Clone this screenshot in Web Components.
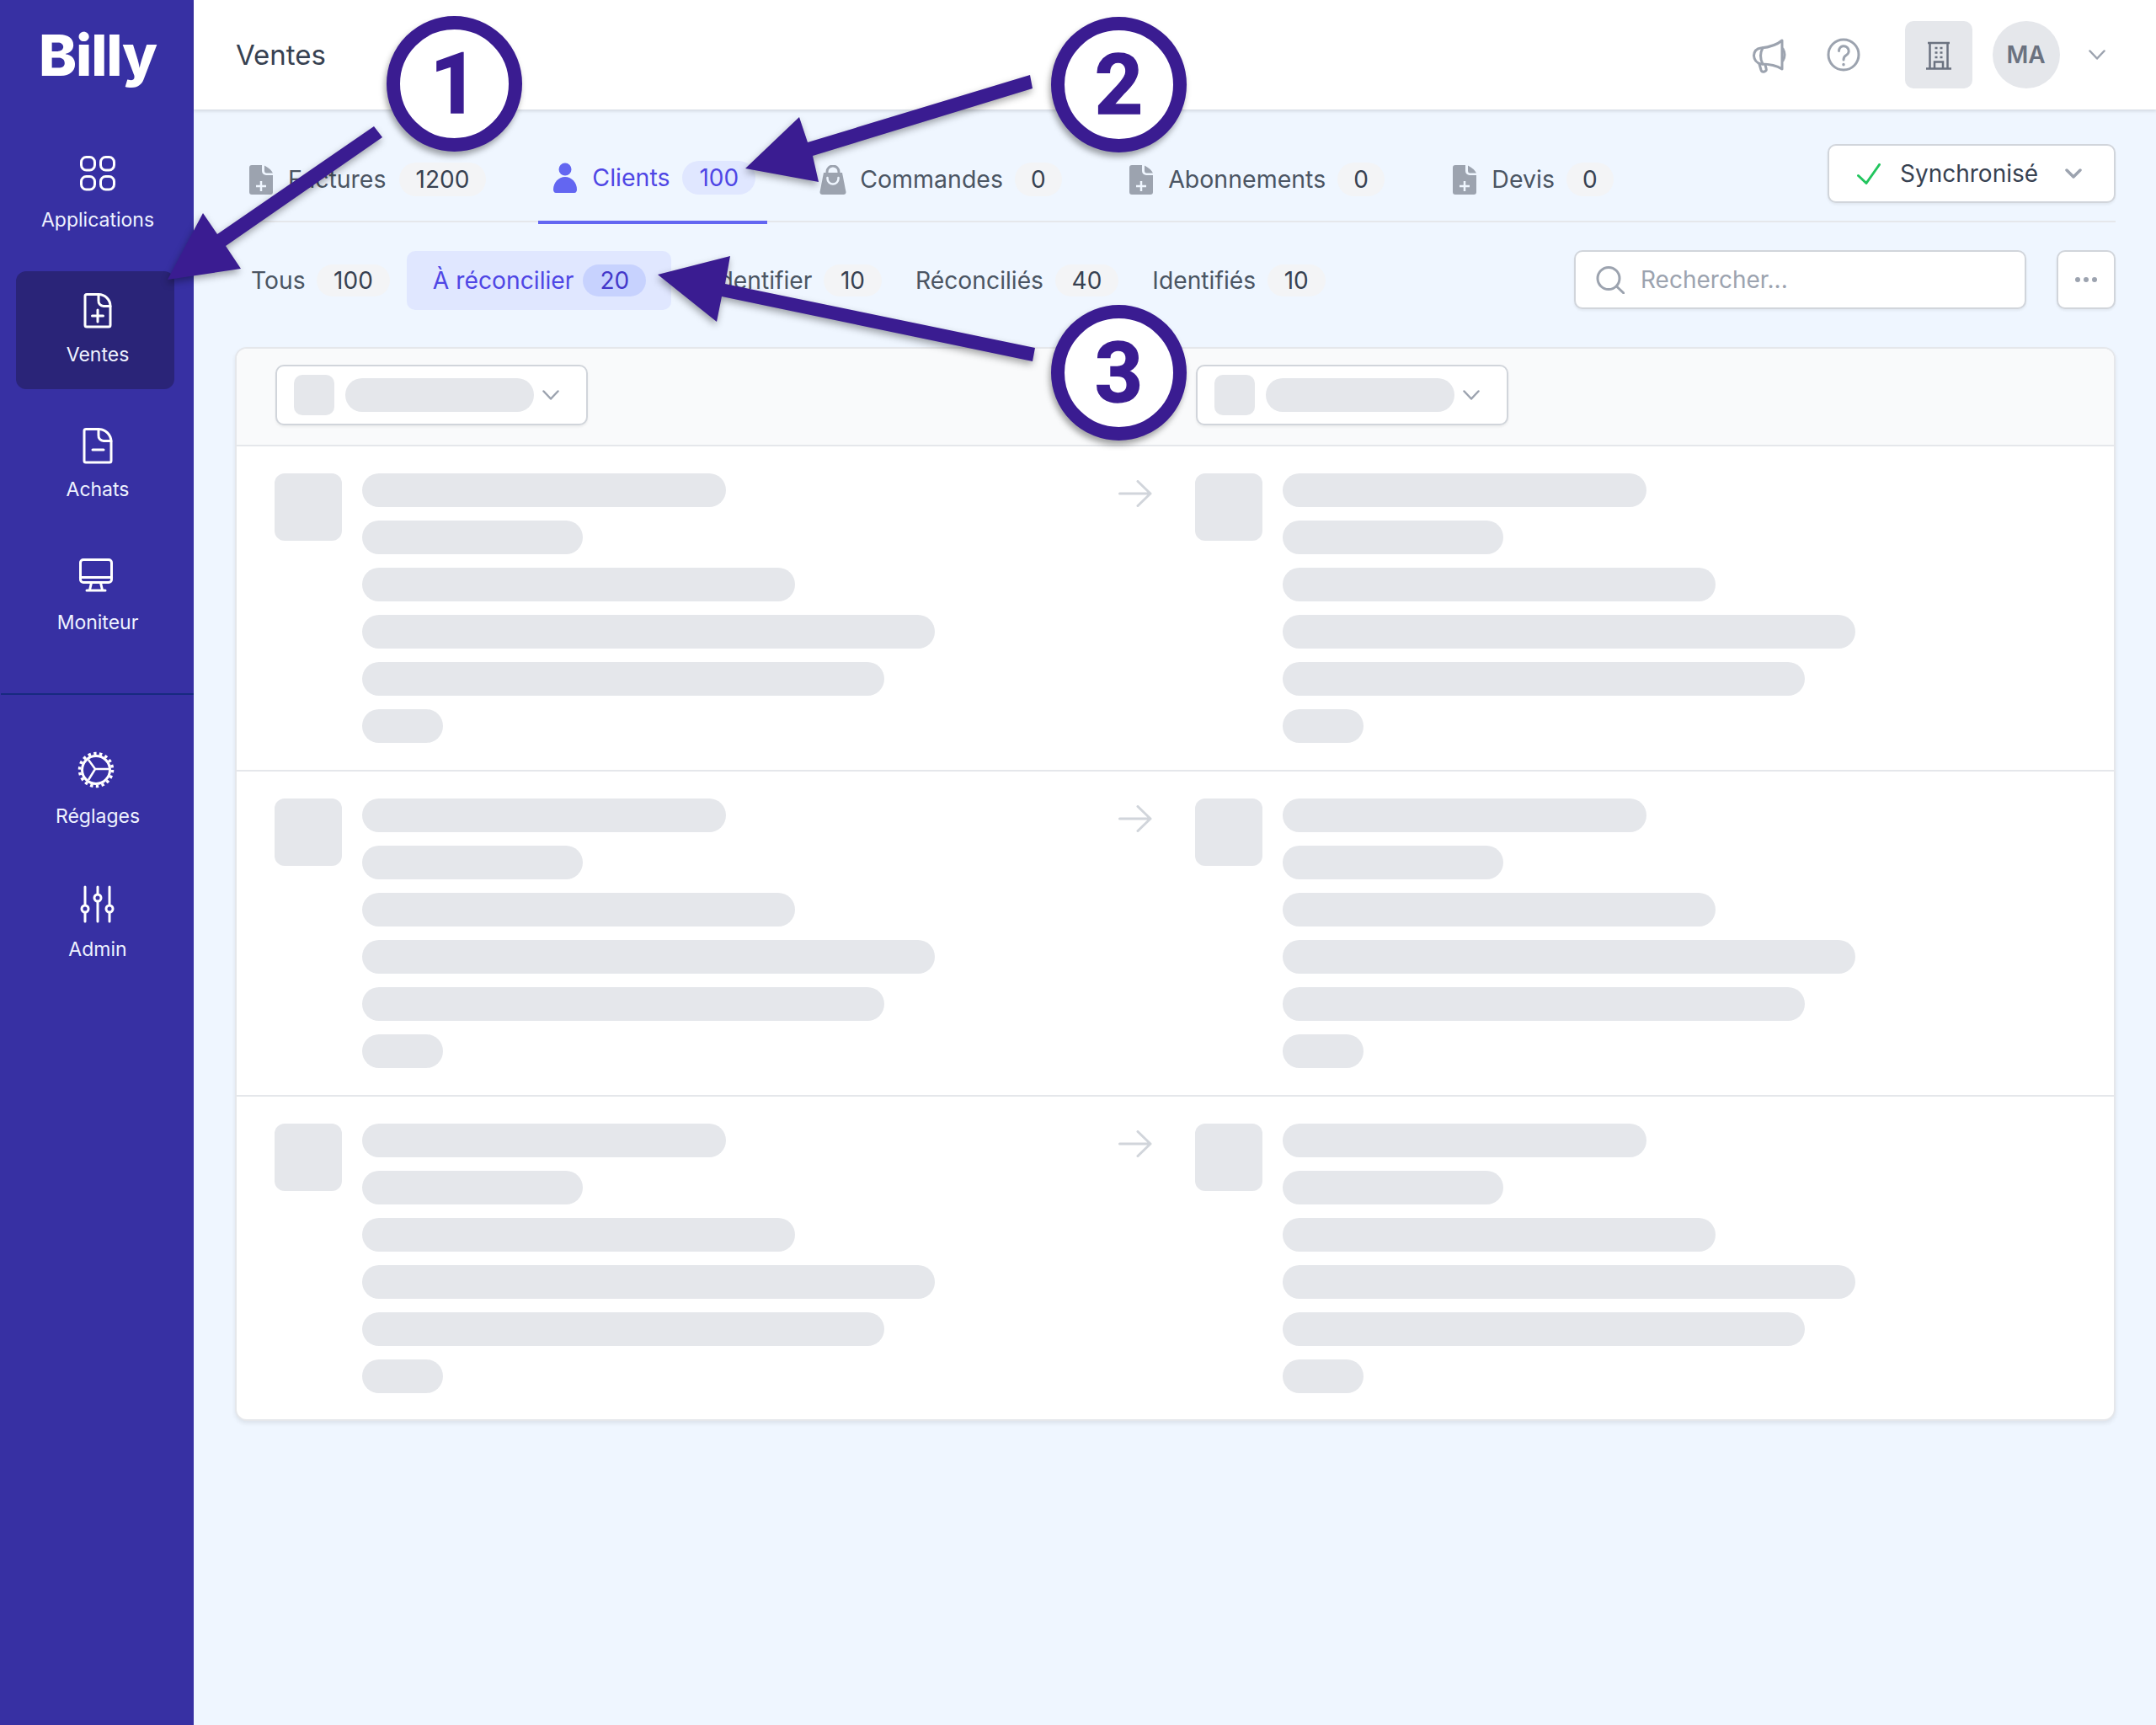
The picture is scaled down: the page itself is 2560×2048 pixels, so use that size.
<!DOCTYPE html>
<html lang="fr">
<head>
<meta charset="utf-8">
<title>Billy</title>
<style>
html,body{margin:0;padding:0;background:#eff6ff}
body{font-family:Inter,"Liberation Sans",sans-serif;width:2560px;height:2048px;position:relative;overflow:hidden}
</style>
</head>
<body>
<app-shell>
  <side-nav slot="nav">
    <nav-item label="Applications" icon="apps"></nav-item>
    <nav-item label="Ventes" icon="doc-plus" active></nav-item>
    <nav-item label="Achats" icon="doc-minus"></nav-item>
    <nav-item label="Moniteur" icon="monitor" style="margin-top:-2px"></nav-item>
    <nav-item slot="bottom" label="Réglages" icon="gear"></nav-item>
    <nav-item slot="bottom" label="Admin" icon="sliders"></nav-item>
  </side-nav>
  <top-bar slot="top" heading="Ventes"></top-bar>
  <tab-nav slot="main">
    <nav-tab label="Factures" count="1200" icon="t-doc" style="margin-left:16px"></nav-tab>
    <nav-tab label="Clients" count="100" icon="t-person" active style="margin-left:62px"></nav-tab>
    <nav-tab label="Commandes" count="0" icon="t-bag" style="margin-left:62.500px;--gap:16px"></nav-tab>
    <nav-tab label="Abonnements" count="0" icon="t-doc" style="margin-left:80.500px"></nav-tab>
    <nav-tab label="Devis" count="0" icon="t-doc" style="margin-left:81.500px"></nav-tab>
  </tab-nav>
  <filter-bar slot="main">
    <filter-tab label="Tous" count="100"></filter-tab>
    <filter-tab label="À réconcilier" count="20" active></filter-tab>
    <filter-tab label="À identifier" count="10" style="margin-left:2px"></filter-tab>
    <filter-tab label="Réconciliés" count="40"></filter-tab>
    <filter-tab label="Identifiés" count="10"></filter-tab>
  </filter-bar>
  <skeleton-card slot="main">
    <skeleton-row></skeleton-row>
    <skeleton-row></skeleton-row>
    <skeleton-row></skeleton-row>
  </skeleton-card>
</app-shell>
<note-layer>
  <note-badge style="left:459px;top:19px" num="1"></note-badge>
  <note-badge style="left:1248px;top:20px" num="2"></note-badge>
  <note-badge style="left:1248px;top:362px" num="3"></note-badge>
</note-layer>

<script>
const ICONS = {
  apps:'<svg width="60" height="60" viewBox="0 0 60 60" fill="none" stroke="currentColor" stroke-width="3"><rect x="10.5" y="6.5" width="16" height="15.5" rx="6"/><rect x="33.5" y="6.5" width="16" height="15.5" rx="6"/><rect x="10.5" y="29.5" width="16" height="15.5" rx="6"/><rect x="33.5" y="29.5" width="16" height="15.5" rx="6"/></svg>',
  'doc-plus':'<svg width="60" height="60" viewBox="0 0 60 60" fill="none" stroke="currentColor" stroke-width="3" stroke-linecap="round" stroke-linejoin="round"><path d="M17 9.500h14a14 14 0 0 1 14 14V46a2 2 0 0 1-2 2H17a2 2 0 0 1-2-2V11.500a2 2 0 0 1 2-2z"/><path d="M31 9.500V17a6 6 0 0 0 6 6.500h8"/><path d="M30 28v14M23.500 35h13"/></svg>',
  'doc-minus':'<svg width="60" height="60" viewBox="0 0 60 60" fill="none" stroke="currentColor" stroke-width="3" stroke-linecap="round" stroke-linejoin="round"><path d="M16 9.500h15a15 15 0 0 1 15 15V47a2 2 0 0 1-2 2H16a2 2 0 0 1-2-2V11.500a2 2 0 0 1 2-2z"/><path d="M31 9.500V17a6 6 0 0 0 6 6.500h9"/><path d="M24 34h13"/></svg>',
  monitor:'<svg width="60" height="60" viewBox="0 0 60 60" fill="none" stroke="currentColor" stroke-width="3" stroke-linecap="round" stroke-linejoin="round"><g transform="translate(0 -1)"><rect x="9.500" y="7.500" width="37" height="27" rx="3.500"/><path d="M9.500 28.500h37"/><path d="M22.500 35l-2 8.500M33.500 35l2 8.500M17 44h22"/></g></svg>',
  gear:'<svg width="60" height="60" viewBox="0 0 60 60" fill="none" stroke="currentColor"><circle cx="28" cy="26" r="16.500" stroke-width="3"/><circle cx="28" cy="26" r="19.500" stroke-width="3.500" stroke-dasharray="3.400 3.406"/><path d="M27 25H43M27 25L19 14M27 25L19 38" stroke-width="2.500"/></svg>',
  sliders:'<svg width="60" height="60" viewBox="0 0 60 60" fill="none" stroke="currentColor" stroke-width="3" stroke-linecap="round"><path d="M15 7v41M30 7v41M44 7v41"/><g fill="#3730a3"><circle cx="15" cy="33" r="4"/><circle cx="30" cy="20" r="4"/><circle cx="44" cy="33" r="4"/></g></svg>',
  't-doc':'<svg width="28" height="35" viewBox="0 0 28 35"><path fill="#9ca3af" d="M3 0h12v7a5 5 0 0 0 5 5h8v20a3 3 0 0 1-3 3H3a3 3 0 0 1-3-3V3a3 3 0 0 1 3-3z"/><path fill="#9ca3af" d="M18 .500Q25 4 28 9.500h-8a2.500 2.500 0 0 1-2-2.500z"/><path stroke="#eff6ff" stroke-width="2.500" d="M14 19v12M8 25h12"/></svg>',
  't-person':'<svg width="28" height="36" viewBox="0 0 28 36"><circle cx="14" cy="8" r="7.500" fill="#6366f1"/><path fill="#6366f1" d="M14 17c8 0 14 7 14 15c0 2-1 4-3 4H3c-2 0-3-2-3-4c0-8 6-15 14-15z"/></svg>',
  't-bag':'<svg width="32" height="35" viewBox="0 0 32 35"><path fill="#9ca3af" d="M5 9h22l4.500 23a3 3 0 0 1-3 3H3.500a3 3 0 0 1-3-3z"/><path fill="none" stroke="#9ca3af" stroke-width="3" d="M9 10V8a7 7 0 0 1 14 0v2"/><path fill="none" stroke="#eff6ff" stroke-width="2.500" stroke-linecap="round" d="M9.500 15v1a6.500 6.500 0 0 0 13 0v-1"/></svg>',
  megaphone:'<svg width="48" height="48" viewBox="0 0 48 48" fill="none" stroke="#9ca3af" stroke-width="3" stroke-linecap="round" stroke-linejoin="round"><path d="M39 7C32 13 24 15 14 16Q6 17 5.500 25Q6 33 14 35C24 35 33 37 39 41Z"/><path d="M40 17Q44 24 40 31"/><path d="M16 16Q11 25 16 35"/><path d="M12 35l2 7q1 3 4 2q3-1 2-4l-1-4"/></svg>',
  help:'<svg width="48" height="48" viewBox="0 0 48 48" fill="none" stroke="#9ca3af" stroke-width="3" stroke-linecap="round"><circle cx="24" cy="24" r="18"/><path d="M18.500 19.500a5.800 5.800 0 1 1 8.700 5c-2.200 1.300-3.200 2.500-3.200 5.500"/><path d="M24 35.500v.2" stroke-width="3.400"/></svg>',
  building:'<svg width="48" height="48" viewBox="0 0 48 48" fill="none" stroke="#6b7280" stroke-width="2.500"><path d="M11 10h26M13.500 10v30M34.500 10v30M9 40.500h30"/><path d="M19 40V32.500h10V40"/><path d="M19.500 16h3M25.500 16h3M19.500 21.500h3M25.500 21.500h3M19.500 27h3M25.500 27h3"/></svg>',
  chevron:'<svg width="20" height="12" viewBox="0 0 20 12" fill="none" stroke="#9ca3af" stroke-width="2.500" stroke-linecap="round" stroke-linejoin="round"><path d="M1.500 1.500L10 10.500L18.500 1.500"/></svg>',
  'chevron-b':'<svg width="20" height="12" viewBox="0 0 20 12" fill="none" stroke="#9ca3af" stroke-width="3.500" stroke-linecap="round" stroke-linejoin="round"><path d="M2 2L10 10L18 2"/></svg>',
  check:'<svg width="28" height="25" viewBox="0 0 28 25" fill="none" stroke="#22c55e" stroke-width="3" stroke-linecap="round" stroke-linejoin="round"><path d="M1.500 14.500L11 23.500L26.500 1.500"/></svg>',
  search:'<svg width="34" height="33" viewBox="0 0 34 33" fill="none" stroke="#9ca3af" stroke-width="3" stroke-linecap="round"><circle cx="15" cy="14.500" r="13"/><path d="M24.500 24L33 32"/></svg>',
  arrow:'<svg width="40" height="32" viewBox="0 0 40 32" fill="none" stroke="#d1d5db" stroke-width="3" stroke-linecap="round" stroke-linejoin="round"><path d="M1.500 16H38M23 1.500L38 16L23 30.500"/></svg>'
};
function def(name, css, html, extra){
  customElements.define(name, class extends HTMLElement{
    constructor(){super();this.attachShadow({mode:'open'})}
    connectedCallback(){
      const a=n=>this.getAttribute(n)||'';
      this.shadowRoot.innerHTML='<style>'+css+'</style>'+html(a,this);
    }
  });
}
def('app-shell',`
:host{display:grid;grid-template-columns:230px 1fr;grid-template-rows:130px 1fr;width:2560px;height:2048px}
.nav{grid-row:1/3;display:block}
.top{display:block}
.main{display:block;padding:32px 49px 0 50px;background:#eff6ff}
`,()=>`<div class="nav"><slot name="nav"></slot></div><div class="top"><slot name="top"></slot></div><div class="main"><slot name="main"></slot></div>`);

def('side-nav',`
:host{display:block;height:2048px;background:#3730a3;color:#fff}
.logo{height:162px;box-sizing:border-box;padding-top:23px;text-align:center;padding-left:2px;font:800 68px/84px Inter,"Liberation Sans",sans-serif;letter-spacing:-1.200px}
.group{display:flex;flex-direction:column;gap:20px;padding:0 23px 0 19px}
.div{height:2px;background:#172a80;margin:43px 0 45px 1px}
.b{gap:18px}
`,()=>`<div class="logo">Billy</div><div class="group"><slot></slot></div><div class="div"></div><div class="group b"><slot name="bottom"></slot></div>`);

def('nav-item',`
:host{display:flex;flex-direction:column;align-items:center;height:140px;box-sizing:border-box;padding:18px 0 0 6px;border-radius:12px;color:#fff;font-size:23px;line-height:36px}
:host([active]){background:#2a2478}
svg{display:block}
.l{margin-top:3px;color:#eef2ff}
`,a=>`${ICONS[a('icon')]}<div class="l">${a('label')}</div>`);

def('top-bar',`
:host{display:flex;align-items:center;height:130px;box-sizing:border-box;background:#fff;padding:0 61.500px 0 50px;box-shadow:0 2px 4px rgba(0,0,0,.12);position:relative}
h1{margin:0;font:400 33px/48px Inter,"Liberation Sans",sans-serif;color:#374151;flex:1}
svg{display:block}
.mega{margin-right:40px}
.help{margin-right:49px}
.box{width:80px;height:80px;border-radius:10px;background:#e5e7eb;display:flex;align-items:center;justify-content:center;margin-right:24px}
.av{width:80px;height:80px;border-radius:50%;background:#e5e7eb;color:#6b7280;display:flex;align-items:center;justify-content:center;font:600 28px/40px Inter,"Liberation Sans",sans-serif;margin-right:34px}
`,a=>`<h1>${a('heading')}</h1><div class="mega">${ICONS.megaphone}</div><div class="help">${ICONS.help}</div><div class="box">${ICONS.building}</div><div class="av">MA</div>${ICONS.chevron}`);

def('tab-nav',`
:host{display:flex;height:102px;box-sizing:border-box;border-bottom:2px solid #e5e7eb;align-items:flex-start}
.t{display:flex;flex:1;align-items:flex-start}
.sync{height:70px;width:342px;box-sizing:border-box;margin-top:9px;border:2px solid #d1d5db;border-radius:10px;background:#fff;box-shadow:0 2px 3px rgba(0,0,0,.06);display:flex;align-items:center;padding-left:33px;color:#374151;font-size:28px;line-height:40px}
.sync span{margin:0 32px 0 23px}
svg{display:block}
`,()=>`<div class="t"><slot></slot></div><div class="sync">${ICONS.check}<span>Synchronisé</span>${ICONS['chevron-b']}</div>`);

def('nav-tab',`
:host{display:flex;align-items:center;height:100px;box-sizing:border-box;padding-top:2px;color:#4b5563;font-size:28.500px;line-height:40px;flex:none}
:host([active]){height:104px;border-bottom:4px solid #6366f1;padding:0 13.500px 2px 18px;color:#4f46e5}
svg{display:block;margin-right:var(--gap,18px)}
.c{display:block;height:40px;padding:0 20px;margin-left:15px;border-radius:20px;background:#f3f4f6;color:#374151;font-size:28px}
.c.one{padding:0 19px;margin-left:14px}
:host([active]) .c{background:#e0e7ff;color:#4f46e5}
`,a=>`${ICONS[a('icon')]}<span>${a('label')}</span><span class="c ${a('count').length==1?'one':''}">${a('count')}</span>`);

def('filter-bar',`
:host{display:flex;align-items:center;margin:33px 0 45px -2px;height:70px}
.t{display:flex;gap:0;flex:1;align-items:center;margin-top:2px}
.s{width:537px;height:70px;box-sizing:border-box;border:2px solid #d1d5db;border-radius:10px;background:#fff;box-shadow:0 2px 3px rgba(0,0,0,.06);display:flex;align-items:center;padding-left:24px;color:#9ca3af;font-size:28px}
.s span{margin-left:19px}
.m{width:70px;height:70px;box-sizing:border-box;border:2px solid #d1d5db;border-radius:10px;background:#fff;box-shadow:0 2px 3px rgba(0,0,0,.06);margin-left:36px;display:flex;align-items:center;justify-content:center;gap:4px}
.m i{width:6px;height:6px;border-radius:50%;background:#9ca3af}
svg{display:block}
`,()=>`<div class="t"><slot></slot></div><div class="s">${ICONS.search}<span>Rechercher...</span></div><div class="m"><i></i><i></i><i></i></div>`);

def('filter-tab',`
:host{display:flex;align-items:center;height:70px;box-sizing:border-box;padding:0 20px;border-radius:10px;color:#4b5563;font-size:28.250px;line-height:38px;flex:none}
:host([active]){background:#e0e7ff;color:#4f46e5;padding:0 30px 0 31px}
.c{display:block;height:38px;padding:0 20px;margin-left:13.500px;border-radius:19px;background:#f3f4f6;color:#374151;font-size:28px}
:host([active]) .c{background:#c7d2fe;color:#4338ca;margin-left:11px}
`,a=>`<span>${a('label')}</span><span class="c">${a('count')}</span>`);

def('skeleton-select',`
:host{display:flex;align-items:center;width:371px;height:72px;box-sizing:border-box;border:2px solid #d1d5db;border-radius:10px;background:#fff;padding-left:20px;box-shadow:0 2px 3px rgba(0,0,0,.06)}
.a{width:48px;height:48px;border-radius:10px;background:#e5e7eb}
.b{width:224px;height:40px;border-radius:20px;background:#e5e7eb;margin:0 10px 0 13px}
svg{display:block}
`,()=>`<div class="a"></div><div class="b"></div>${ICONS.chevron}`);

def('skeleton-card',`
:host{display:block;width:2233px;margin-left:-1px;box-sizing:border-box;border:2px solid #e5e7eb;border-radius:14px;background:#fff;box-shadow:0 3px 5px rgba(0,0,0,.08);overflow:hidden}
.h{display:flex;gap:722px;height:116px;box-sizing:border-box;padding:19px 0 0 46px;background:#f9fafb;border-bottom:2px solid #e5e7eb}
`,()=>`<div class="h"><skeleton-select></skeleton-select><skeleton-select></skeleton-select></div><slot></slot>`);

def('skeleton-block',`
:host{display:flex;gap:24px}
.a{width:80px;height:80px;border-radius:12px;background:#e5e7eb}
.c{display:flex;flex-direction:column;gap:16px}
.c div{height:40px;border-radius:20px;background:#e5e7eb}
`,()=>`<div class="a"></div><div class="c">${[432,262,514,680,620,96].map(w=>`<div style="width:${w}px"></div>`).join('')}</div>`);

def('skeleton-row',`
:host{display:grid;grid-template-columns:1002px 40px 1fr;column-gap:0;height:386px;box-sizing:border-box;padding:32px 0 0 45px;border-bottom:2px solid #e5e7eb}
:host(:last-child){border-bottom:0;height:383px}
.ar{margin-top:8px}
.r{margin-left:51px}
svg{display:block}
`,()=>`<skeleton-block></skeleton-block><div class="ar">${ICONS.arrow}</div><skeleton-block class="r"></skeleton-block>`);

def('note-badge',`
:host{position:absolute;display:flex;align-items:center;justify-content:center;width:161px;height:161px;box-sizing:border-box;border:16px solid #3a1c91;border-radius:50%;background:#fff;color:#3a1c91;font:700 100px/1 Roboto,"Liberation Sans",Arial,sans-serif;-webkit-text-stroke:1.500px #3a1c91;box-shadow:-2px 5px 7px rgba(0,0,0,.35)}
`,a=>`${a('num')}`);

def('note-layer',`
:host{position:absolute;left:0;top:0;width:2560px;height:2048px;z-index:5;pointer-events:none}
svg{position:absolute;left:0;top:0;filter:drop-shadow(-1px 4px 4px rgba(0,0,0,.35))}
`,()=>`<svg width="2560" height="2048" viewBox="0 0 2560 2048" fill="#3a1c91">
<polygon points="444,150 454,163 268,292 286,319 199,332 241,253 258,278"/>
<polygon points="1223,89 1226,105 965,185 972,216 885,200 949,139 959,169"/>
<polygon points="1229,413 1226,429 857,352 851,382 781,326 867,304 861,337"/>
</svg><slot></slot>`);
</script>
</body>
</html>
